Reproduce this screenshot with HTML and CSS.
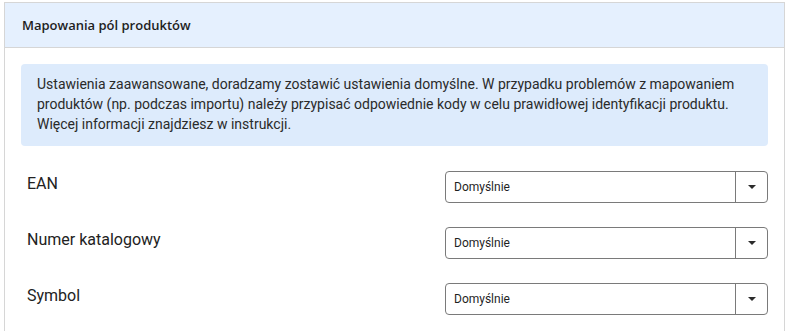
FILE: index.html
```html
<!doctype html>
<html lang="pl">
  <head>
    <meta charset="UTF-8" />
    <meta name="viewport" content="width=device-width, initial-scale=1" />
    <title>Mapowania pól produktów</title>
    <link rel="stylesheet" href="styles.css">
  </head>
  <body>
    <section class="c-card">
      <header class="c-card__header">
        <h2 class="c-card__title">Mapowania pól produktów</h2>
      </header>

      <div class="c-card__body">
        <p class="c-alert">
          Ustawienia zaawansowane, doradzamy zostawić ustawienia domyślne. W przypadku problemów z mapowaniem
          produktów (np. podczas importu) należy przypisać odpowiednie kody w celu prawidłowej identyfikacji produktu.
          Więcej informacji znajdziesz w instrukcji.
        </p>

        <div class="c-form">
          <div class="c-form__row">
            <label class="c-form__label">EAN</label>
            <div class="c-select">
              <span class="c-select__value">Domyślnie</span>
              <span class="c-select__toggle"><span class="c-select__caret"></span></span>
            </div>
          </div>

          <div class="c-form__row">
            <label class="c-form__label">Numer katalogowy</label>
            <div class="c-select">
              <span class="c-select__value">Domyślnie</span>
              <span class="c-select__toggle"><span class="c-select__caret"></span></span>
            </div>
          </div>

          <div class="c-form__row">
            <label class="c-form__label">Symbol</label>
            <div class="c-select">
              <span class="c-select__value">Domyślnie</span>
              <span class="c-select__toggle"><span class="c-select__caret"></span></span>
            </div>
          </div>
        </div>
      </div>
    </section>
  </body>
</html>
```

FILE: styles.css
```css
html,
body {
  height: 100%;
}

body {
  margin: 0;
  padding: 2px 3px 0 4px;
  box-sizing: border-box;
  background: #fff;
  font-family: 'Roboto', 'Liberation Sans', sans-serif;
  color: #212121;
}

.c-card {
  min-height: 100%;
  border: 1px solid #d6d6d6;
  border-bottom: 0;
  box-sizing: border-box;
}

.c-card__header {
  height: 44px;
  padding: 0 17px;
  display: flex;
  align-items: center;
  background-color: #e5f0fe;
  border-bottom: 1px solid #d6d6d6;
}

.c-card__title {
  margin: 0;
  font-family: 'Open Sans', sans-serif;
  font-size: 13px;
  font-weight: 600;
  color: #1e1e1e;
}

.c-card__body {
  padding: 16px 16px 0;
}

.c-alert {
  margin: 0 0 25px;
  padding: 10px 16px 12px;
  border-radius: 4px;
  background-color: #ddebfc;
  font-size: 14px;
  line-height: 20px;
  color: #2a2a2a;
}

.c-form {
  display: grid;
  gap: 24px;
}

.c-form__row {
  display: grid;
  grid-template-columns: 1fr 323px;
  align-items: start;
}

.c-form__label {
  padding: 1px 0 0 6px;
  font-size: 16px;
  line-height: 24px;
  color: #222;
}

.c-select {
  height: 32px;
  display: flex;
  border: 1px solid #7a7a7a;
  border-radius: 4px;
  box-sizing: border-box;
}

.c-select__value {
  flex: 1;
  padding-left: 8px;
  display: flex;
  align-items: center;
  font-size: 12px;
  color: #1f1f1f;
}

.c-select__toggle {
  width: 31px;
  display: flex;
  align-items: center;
  justify-content: center;
  border-left: 1px solid #7a7a7a;
}

.c-select__caret {
  width: 0;
  height: 0;
  border-left: 4px solid transparent;
  border-right: 4px solid transparent;
  border-top: 4px solid #2b2b2b;
}
```
